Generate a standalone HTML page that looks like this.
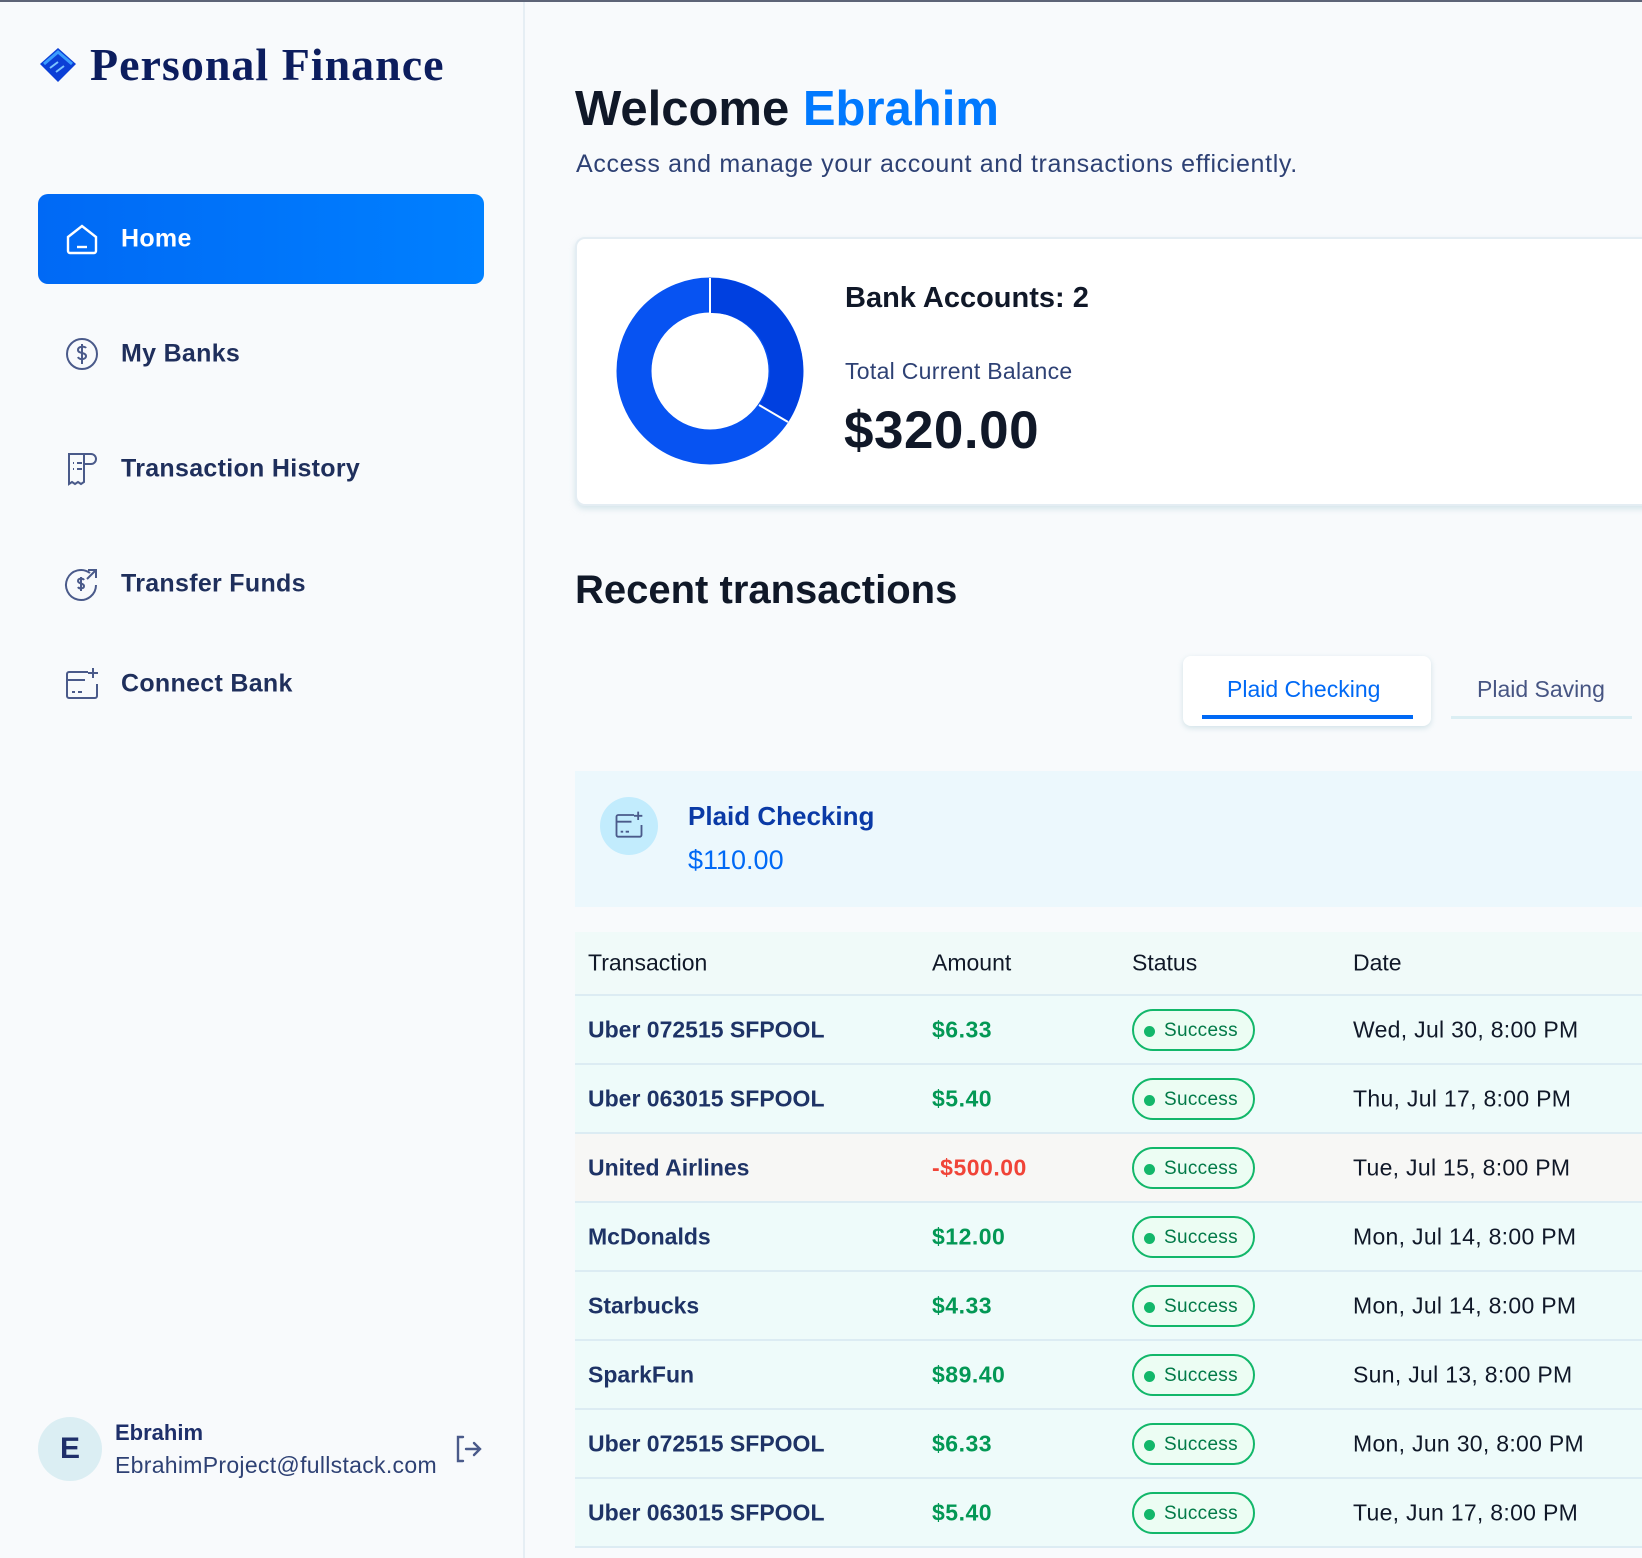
<!DOCTYPE html>
<html><head><style>
*{margin:0;padding:0;box-sizing:border-box}
body{width:1642px;height:1558px;background:#f8fafc;font-family:"Liberation Sans",sans-serif;position:relative;overflow:hidden;color:#101828}
.a{position:absolute;white-space:nowrap}
.nav{position:absolute;left:121px;font-size:25px;font-weight:bold;color:#1f2f5c;transform:translateY(-50%);letter-spacing:0.3px}
.ic{position:absolute;left:64px;width:36px;height:36px;transform:translateY(-50%)}
.row{position:absolute;left:575px;width:1067px;height:69px;border-bottom:2px solid #dcecf3;background:#eefbfa}
.row div{position:absolute;top:50%;transform:translateY(-50%);font-size:23px;white-space:nowrap}
.n{left:13px;font-weight:bold;color:#1e3366}
.m{left:357px;font-weight:bold;color:#039855;letter-spacing:0.5px}
.d{left:778px;color:#101828;letter-spacing:0.3px}
.b{left:557px;width:123px;height:42px;border:2px solid #12b76a;border-radius:21px;background:#ecfdf3;color:#027a48;font-size:19px!important;padding-left:30px;line-height:40px;letter-spacing:0.3px}
.b:before{content:"";position:absolute;left:10px;top:15px;width:11px;height:11px;border-radius:50%;background:#12b76a}
</style></head><body>
<div class="a" style="left:0;top:0;width:1642px;height:2px;background:#5d6477"></div>
<div class="a" style="left:523px;top:2px;width:2px;height:1556px;background:#e6eef4"></div>
<svg class="a" style="left:38px;top:46px" width="40" height="40" viewBox="0 0 40 40"><path d="M20 2 L38 18 L20 36 L2 18Z" fill="#0b3fd6"/><path d="M6 18 L20 6 L34 18" fill="none" stroke="#3b9cff" stroke-width="3"/><path d="M12 22l8-6M18 26l8-6" stroke="#7cc4ff" stroke-width="2"/></svg>
<div class="a" style="left:90px;top:38px;font-family:'Liberation Serif',serif;font-weight:bold;font-size:46px;letter-spacing:1px;color:#0c1d5e">Personal Finance</div>
<div class="a" style="left:38px;top:194px;width:446px;height:90px;border-radius:10px;background:linear-gradient(90deg,#0069f5,#0080ff)"></div>
<svg class="ic" style="top:239px" viewBox="0 0 36 36" fill="none" stroke="#fff" stroke-width="2.4"><path d="M4 16 L18 5 L32 16 V30 a2 2 0 0 1-2 2 H6 a2 2 0 0 1-2-2Z"/><path d="M13 26h10"/></svg>
<div class="nav" style="top:239px;color:#fff">Home</div>
<svg class="ic" style="top:354px" viewBox="0 0 36 36" fill="none" stroke="#4a5a8a" stroke-width="2"><circle cx="18" cy="18" r="15"/><path d="M22 12c-1-2-8-2-8 2s8 2 8 6-7 4-8 1M18 8v20"/></svg>
<div class="nav" style="top:354px">My Banks</div>
<svg class="ic" style="top:469px" viewBox="0 0 36 36" fill="none" stroke="#4a5a8a" stroke-width="2"><path d="M22 3H5v30l3-2 3 2 3-2 3 2 3-2 V3h7a4 4 0 0 1 0 10h-7"/><path d="M9 12h1M13 12h5M9 18h1M13 18h5"/></svg>
<div class="nav" style="top:469px">Transaction History</div>
<svg class="ic" style="top:584px" viewBox="0 0 36 36" fill="none" stroke="#4a5a8a" stroke-width="2"><path d="M26 7a15 15 0 1 0 6 12"/><path d="M24 4h8v8M32 4l-9 9"/><path d="M20 14c-1-2-6-2-6 1s6 2 6 5-5 3-6 1M17 11v14"/></svg>
<div class="nav" style="top:584px">Transfer Funds</div>
<svg class="ic" style="top:684px" viewBox="0 0 36 36" fill="none" stroke="#4a5a8a" stroke-width="2"><path d="M24 6H5a2 2 0 0 0-2 2v22a2 2 0 0 0 2 2h26a2 2 0 0 0 2-2V18"/><path d="M3 14h18M29 2v10M24 7h10M8 26h3M14 26h4"/></svg>
<div class="nav" style="top:684px">Connect Bank</div>
<div class="a" style="left:38px;top:1417px;width:64px;height:64px;border-radius:50%;background:#dbeef3;color:#1e2f6a;font-weight:bold;font-size:30px;text-align:center;line-height:64px">E</div>
<div class="a" style="left:115px;top:1420px;font-size:22px;font-weight:bold;color:#1e2f6a">Ebrahim</div>
<div class="a" style="left:115px;top:1452px;font-size:23px;letter-spacing:0.3px;color:#2e4174">EbrahimProject@fullstack.com</div>
<svg class="a" style="left:452px;top:1433px" width="32" height="32" viewBox="0 0 32 32" fill="none" stroke="#4a5a8a" stroke-width="2.4" stroke-linecap="round"><path d="M11 4H6v24h5M14 16h14M22 10l6 6-6 6"/></svg>

<div class="a" style="left:575px;top:81px;font-size:49px;font-weight:bold;color:#101828">Welcome <span style="color:#0179fe">Ebrahim</span></div>
<div class="a" style="left:576px;top:150px;font-size:25px;letter-spacing:0.65px;color:#2e4174">Access and manage your account and transactions efficiently.</div>
<div class="a" style="left:575px;top:237px;width:1080px;height:269px;border:2px solid #e4edf3;border-radius:10px;background:#fff;box-shadow:0 3px 6px rgba(180,210,220,.5)"></div>
<svg class="a" style="left:615px;top:276px" width="190" height="190" viewBox="0 0 190 190"><circle cx="95" cy="95" r="76" fill="none" stroke="#0753f2" stroke-width="35"/><path d="M95 2 A93 93 0 0 1 173 146 L144 129 A58 58 0 0 0 95 37Z" fill="#0040e0"/><path d="M95 2v35M173 146l-29-17" stroke="#fff" stroke-width="2"/></svg>
<div class="a" style="left:845px;top:282px;font-size:29px;font-weight:bold;color:#101828">Bank Accounts: 2</div>
<div class="a" style="left:845px;top:358px;font-size:23px;letter-spacing:0.3px;color:#2e4174">Total Current Balance</div>
<div class="a" style="left:844px;top:400px;font-size:53px;letter-spacing:0.5px;font-weight:bold;color:#101828">$320.00</div>
<div class="a" style="left:575px;top:568px;font-size:40px;font-weight:bold;color:#101828">Recent transactions</div>
<div class="a" style="left:1183px;top:656px;width:248px;height:70px;border-radius:8px;background:#fff;box-shadow:0 2px 6px rgba(150,190,200,.4)"></div>
<div class="a" style="left:1202px;top:715px;width:211px;height:4px;background:#0069f5"></div>
<div class="a" style="left:1227px;top:676px;font-size:23px;color:#0069f5">Plaid Checking</div>
<div class="a" style="left:1451px;top:716px;width:181px;height:3px;background:#dbeef3"></div>
<div class="a" style="left:1477px;top:676px;font-size:23px;color:#475583">Plaid Saving</div>
<div class="a" style="left:575px;top:771px;width:1067px;height:136px;background:#ecf8fd"></div>
<div class="a" style="left:600px;top:797px;width:58px;height:58px;border-radius:50%;background:#c2ecfd"></div>
<svg class="a" style="left:614px;top:810px" width="30" height="30" viewBox="0 0 36 36" fill="none" stroke="#4a5a8a" stroke-width="2.2"><path d="M24 6H5a2 2 0 0 0-2 2v22a2 2 0 0 0 2 2h26a2 2 0 0 0 2-2V18"/><path d="M3 14h18M29 2v10M24 7h10M8 26h3M14 26h4"/></svg>
<div class="a" style="left:688px;top:801px;font-size:26px;font-weight:bold;color:#0a3aa6">Plaid Checking</div>
<div class="a" style="left:688px;top:845px;font-size:27px;color:#0069f5">$110.00</div>
<div class="row" style="top:932px;height:64px;background:#f0faf9">
<div style="left:13px;color:#101828">Transaction</div><div style="left:357px">Amount</div><div style="left:557px">Status</div><div style="left:778px">Date</div></div>
<div class="row" style="top:996px"><div class="n">Uber 072515 SFPOOL</div><div class="m">$6.33</div><div class="b">Success</div><div class="d">Wed, Jul 30, 8:00 PM</div></div>
<div class="row" style="top:1065px"><div class="n">Uber 063015 SFPOOL</div><div class="m">$5.40</div><div class="b">Success</div><div class="d">Thu, Jul 17, 8:00 PM</div></div>
<div class="row" style="top:1134px;background:#f7f7f5"><div class="n">United Airlines</div><div class="m" style="color:#f04438">-$500.00</div><div class="b">Success</div><div class="d">Tue, Jul 15, 8:00 PM</div></div>
<div class="row" style="top:1203px"><div class="n">McDonalds</div><div class="m">$12.00</div><div class="b">Success</div><div class="d">Mon, Jul 14, 8:00 PM</div></div>
<div class="row" style="top:1272px"><div class="n">Starbucks</div><div class="m">$4.33</div><div class="b">Success</div><div class="d">Mon, Jul 14, 8:00 PM</div></div>
<div class="row" style="top:1341px"><div class="n">SparkFun</div><div class="m">$89.40</div><div class="b">Success</div><div class="d">Sun, Jul 13, 8:00 PM</div></div>
<div class="row" style="top:1410px"><div class="n">Uber 072515 SFPOOL</div><div class="m">$6.33</div><div class="b">Success</div><div class="d">Mon, Jun 30, 8:00 PM</div></div>
<div class="row" style="top:1479px"><div class="n">Uber 063015 SFPOOL</div><div class="m">$5.40</div><div class="b">Success</div><div class="d">Tue, Jun 17, 8:00 PM</div></div>
</body></html>
